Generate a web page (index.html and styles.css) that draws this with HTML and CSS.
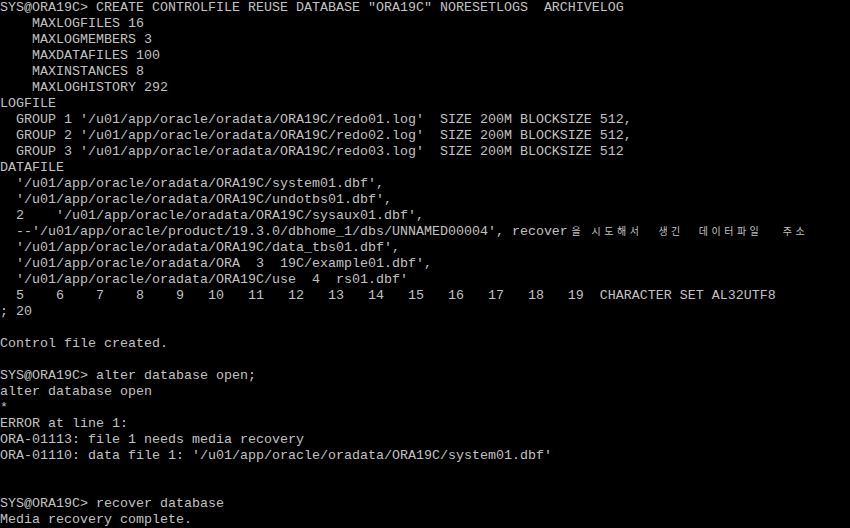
FILE: index.html
```html
<!DOCTYPE html>
<html lang="ko">
<head>
<meta charset="utf-8">
<title>SQL*Plus</title>
<link rel="stylesheet" href="styles.css">
</head>
<body>
<main class="term">
<pre class="screen">SYS@ORA19C&gt; CREATE CONTROLFILE REUSE DATABASE "ORA19C" NORESETLOGS  ARCHIVELOG
    MAXLOGFILES 16
    MAXLOGMEMBERS 3
    MAXDATAFILES 100
    MAXINSTANCES 8
    MAXLOGHISTORY 292
LOGFILE
  GROUP 1 '/u01/app/oracle/oradata/ORA19C/redo01.log'  SIZE 200M BLOCKSIZE 512,
  GROUP 2 '/u01/app/oracle/oradata/ORA19C/redo02.log'  SIZE 200M BLOCKSIZE 512,
  GROUP 3 '/u01/app/oracle/oradata/ORA19C/redo03.log'  SIZE 200M BLOCKSIZE 512
DATAFILE
  '/u01/app/oracle/oradata/ORA19C/system01.dbf',
  '/u01/app/oracle/oradata/ORA19C/undotbs01.dbf',
  2    '/u01/app/oracle/oradata/ORA19C/sysaux01.dbf',
  --'/u01/app/oracle/product/19.3.0/dbhome_1/dbs/UNNAMED00004', recover<span class="ko k1">을</span><span class="ko k2">시도해서</span><span class="ko k3">생긴</span><span class="ko k4">데이터파일</span><span class="ko k5">주소</span>
  '/u01/app/oracle/oradata/ORA19C/data_tbs01.dbf',
  '/u01/app/oracle/oradata/ORA  3  19C/example01.dbf',
  '/u01/app/oracle/oradata/ORA19C/use  4  rs01.dbf'
  5    6    7    8    9   10   11   12   13   14   15   16   17   18   19  CHARACTER SET AL32UTF8
; 20

Control file created.

SYS@ORA19C&gt; alter database open;
alter database open
*
ERROR at line 1:
ORA-01113: file 1 needs media recovery
ORA-01110: data file 1: '/u01/app/oracle/oradata/ORA19C/system01.dbf'


SYS@ORA19C&gt; recover database
Media recovery complete.</pre>
</main>
</body>
</html>
```

FILE: styles.css
```css
html, body {
  margin: 0;
  padding: 0;
  background: #000000;
  width: 100%;
  height: 100%;
  overflow: hidden;
}

.term {
  background: #000000;
  width: 850px;
  height: 528px;
  overflow: hidden;
}

.screen {
  margin: 0;
  padding: 0;
  font-family: "Liberation Mono", "Courier New", monospace;
  font-size: 13.3333px;
  line-height: 16px;
  color: #c0c0c0;
  white-space: pre;
}

.ko {
  display: inline-block;
  font-family: "Noto Sans CJK KR", sans-serif;
  font-size: 10px;
  line-height: 10px;
  letter-spacing: 3.5px;
  vertical-align: baseline;
}

.k1 { margin-left: 3.5px; }
.k2 { margin-left: 7.5px; }
.k3 { margin-left: 16px; }
.k4 { margin-left: 15px; }
.k5 { margin-left: 20.5px; }
```
